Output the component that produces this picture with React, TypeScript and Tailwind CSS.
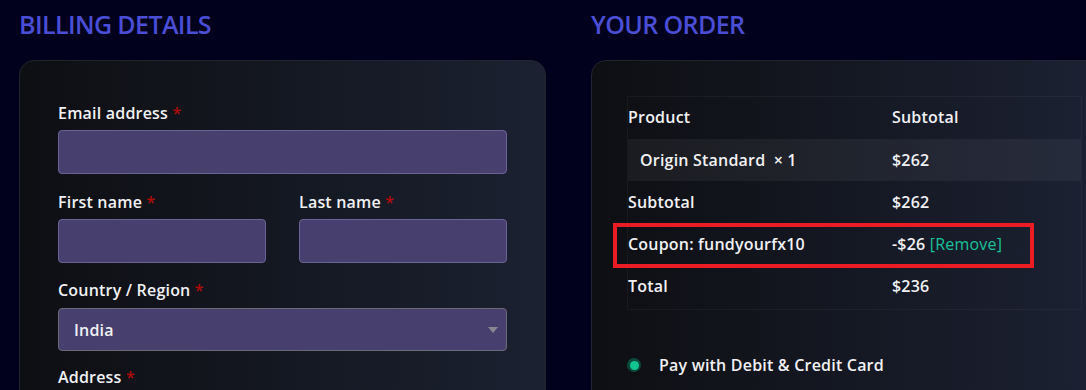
const font = { fontFamily: '"Open Sans", "Noto Sans", sans-serif' };

function Label({ text }: { text: string }) {
  return (
    <div className="text-[16px] font-semibold tracking-[0.2px] text-[#f1f1f4] leading-[22px]">
      {text} <span className="text-[#b00b0b]">*</span>
    </div>
  );
}

function Field({ className = '' }: { className?: string }) {
  return <div className={`h-[44px] rounded-[4px] border border-[#6a6496] bg-[#47406f] ${className}`} />;
}

export default function App() {
  return (
    <div style={font} className="w-[1086px] h-[390px] overflow-hidden bg-[#01011e]">
      <div className="flex gap-[45px] pl-[19px]">
        {/* Billing details */}
        <div className="w-[527px] shrink-0">
          <h2 className="text-[25px] font-semibold text-[#4a4ed6] leading-[36px] pt-[6px] tracking-[-0.6px]">
            BILLING DETAILS
          </h2>
          <div className="mt-[18px] rounded-[15px] border border-[#22252f] bg-linear-to-r from-[#0e0f13] to-[#1b2131] px-[38px] pt-[41px] pb-8">
            <Label text="Email address" />
            <Field className="mt-[6px]" />

            <div className="mt-[17px] flex gap-[33px]">
              <div className="w-[208px]">
                <Label text="First name" />
                <Field className="mt-[6px]" />
              </div>
              <div className="flex-1">
                <Label text="Last name" />
                <Field className="mt-[6px]" />
              </div>
            </div>

            <div className="mt-[16px]">
              <Label text="Country / Region" />
              <div className="mt-[7px] h-[43px] rounded-[4px] border border-[#6b6a78] bg-[#47406f] flex items-center justify-between pl-[15px] pr-[8px]">
                <span className="text-[16px] font-semibold tracking-[0.2px] text-[#f1f1f4]">India</span>
                <svg width="10" height="6" viewBox="0 0 10 6"><path d="M0 0h10L5 6z" fill="#8a8794" /></svg>
              </div>
            </div>

            <div className="mt-[15px]">
              <Label text="Address" />
            </div>
          </div>
        </div>

        {/* Your order */}
        <div className="w-[527px] shrink-0">
          <h2 className="text-[25px] font-semibold text-[#4a4ed6] leading-[36px] pt-[6px] tracking-[-0.6px]">
            YOUR ORDER
          </h2>
          <div className="mt-[18px] rounded-[15px] border border-[#22252f] bg-linear-to-r from-[#0e0f13] to-[#1c2234] px-[35px] pt-[35px] pb-10">
            <div className="relative border border-white/[0.04] text-[16px] font-semibold tracking-[0.2px] text-[#f1f1f4]">
              <div className="flex h-[42px] items-center pb-[3px]">
                <div className="w-[264px]">Product</div>
                <div>Subtotal</div>
              </div>
              <div className="flex h-[42px] items-center bg-white/[0.05]">
                <div className="w-[264px] pl-[12px]">
                  Origin Standard <span className="ml-1">× 1</span>
                </div>
                <div>$262</div>
              </div>
              <div className="flex h-[42px] items-center">
                <div className="w-[264px]">Subtotal</div>
                <div>$262</div>
              </div>
              <div className="relative flex h-[44px] items-center pb-[3px]">
                <div className="w-[264px]">Coupon: fundyourfx10</div>
                <div>
                  -$26 <span className="text-[#1ac29a] font-medium">[Remove]</span>
                </div>
                <div className="absolute left-[-15px] top-0 w-[421px] h-[45px] border-[4px] border-[#ec1c24]" />
              </div>
              <div className="flex h-[42px] items-center pb-[4px]">
                <div className="w-[264px]">Total</div>
                <div>$236</div>
              </div>
            </div>

            <div className="mt-[43px] flex items-center">
              <span className="flex h-[14px] w-[14px] items-center justify-center rounded-full bg-[#0a4a3c]">
                <span className="h-[9px] w-[9px] rounded-full bg-[#12c492]" />
              </span>
              <span className="ml-[18px] text-[16px] font-semibold tracking-[0.2px] text-[#f1f1f4]">Pay with Debit &amp; Credit Card</span>
            </div>
          </div>
        </div>
      </div>
    </div>
  );
}
